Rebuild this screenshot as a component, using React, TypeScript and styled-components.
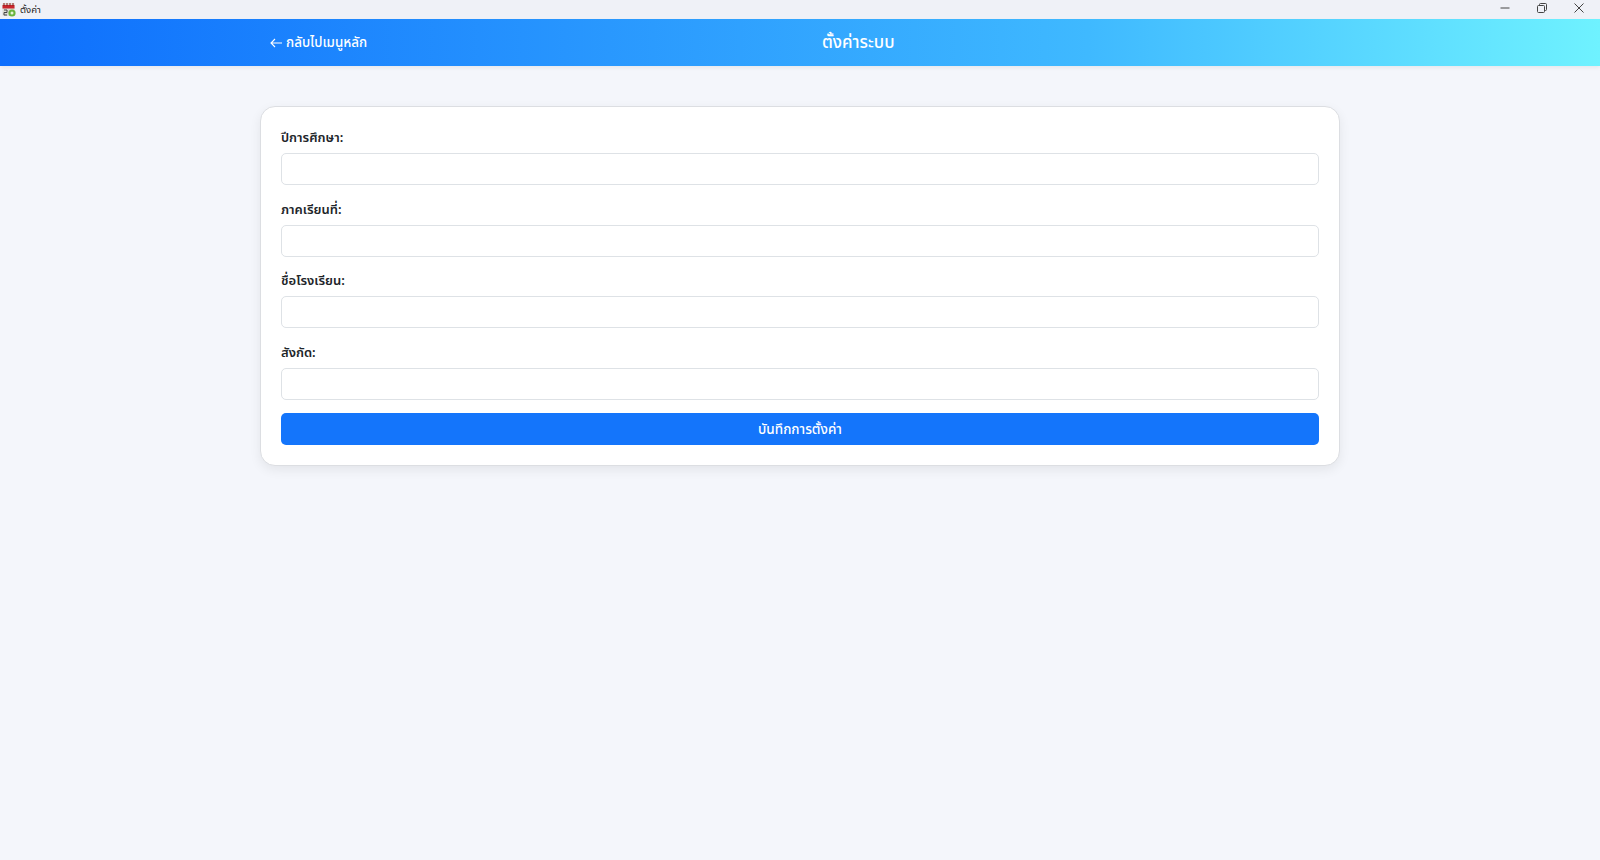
import styled, { createGlobalStyle } from 'styled-components'

const GlobalStyle = createGlobalStyle`
  html, body {
    margin: 0;
    padding: 0;
    height: 100%;
    background: #f4f6fb;
    font-family: 'Noto Sans', 'Noto Sans Thai', 'Noto Sans CJK SC', 'DejaVu Sans', sans-serif;
  }
  * { box-sizing: border-box; }
`

const Page = styled.div`
  width: 1600px;
  height: 860px;
  display: flex;
  flex-direction: column;
  overflow: hidden;
`

const TitleBar = styled.div`
  height: 19px;
  flex: none;
  display: flex;
  align-items: center;
  background: #eff1f7;
  padding-left: 2px;
`

const TitleText = styled.span`
  margin-left: 4px;
  font-size: 9.5px;
  color: #222;
`

const WindowButtons = styled.div`
  margin-left: auto;
  display: flex;
  align-items: center;
  gap: 27px;
  padding: 0 16px 3px 0;
  svg { display: block; }
`

const Header = styled.header`
  height: 47px;
  flex: none;
  display: flex;
  align-items: center;
  padding: 1px 0 0 270px;
  background: linear-gradient(90deg, #0d6efd 0%, #3fb9ff 68%, #6ff2ff 100%);
  box-shadow: 0 2px 4px rgba(0, 0, 0, 0.06);
  color: #fff;
`

const BackLink = styled.a`
  display: flex;
  align-items: center;
  gap: 3px;
  width: 552px;
  font-size: 13.4px;
  font-weight: 500;
  color: #fff;
`

const Title = styled.h1`
  margin: 0;
  font-size: 16.9px;
  font-weight: 500;
`

const Card = styled.main`
  width: 1080px;
  height: 360px;
  margin: 40px 0 0 260px;
  padding: 14px 20px 20px;
  background: #fff;
  border: 1px solid #dcdee2;
  border-radius: 15px;
  box-shadow: 0 4px 12px rgba(0, 0, 0, 0.07);
`

const Field = styled.div`
  display: flex;
  flex-direction: column;
  height: 71.6px;
`

const Label = styled.label`
  height: 32px;
  display: flex;
  align-items: center;
  padding-top: 2px;
  font-size: 13px;
  font-weight: 600;
  color: #212529;
`

const Input = styled.input`
  width: 100%;
  height: 32px;
  background: #fff;
  border: 1px solid #dee2e6;
  border-radius: 5px;
`

const SaveButton = styled.button`
  display: block;
  width: 100%;
  height: 32px;
  margin-top: 6px;
  padding-top: 2px;
  background: #1475fb;
  border: none;
  border-radius: 5px;
  color: #fff;
  font: inherit;
  font-size: 13.5px;
  font-weight: 500;
`

const AppIcon = () => (
  <svg width="14" height="15" viewBox="0 0 14 15">
    <rect x="0.5" y="1" width="12" height="13" rx="1" fill="#dcdcd6" />
    <rect x="0.5" y="3" width="12" height="3.5" fill="#c8242c" />
    <path d="M2 1v3M5 1v3M8 1v3M11 1v3" stroke="#8a1c1c" strokeWidth="1" />
    <path d="M2 8h3v2.5H2V13h3" fill="none" stroke="#444" strokeWidth="1" />
    <circle cx="10" cy="11" r="3.6" fill="#6ab43e" />
    <circle cx="10" cy="11" r="1.5" fill="#e6f2d8" />
  </svg>
)

const fields = ['ปีการศึกษา:', 'ภาคเรียนที่:', 'ชื่อโรงเรียน:', 'สังกัด:']

export default function App() {
  return (
    <Page>
      <GlobalStyle />
      <TitleBar>
        <AppIcon />
        <TitleText>ตั้งค่า</TitleText>
        <WindowButtons>
          <svg width="10" height="10" viewBox="0 0 10 10">
            <path d="M0.5 5h9" stroke="#444" strokeWidth="1" />
          </svg>
          <svg width="10" height="10" viewBox="0 0 10 10" fill="none" stroke="#444" strokeWidth="1">
            <rect x="0.5" y="2.5" width="7" height="7" rx="1" />
            <path d="M2.5 2.5V1.5a1 1 0 0 1 1-1h5a1 1 0 0 1 1 1v5a1 1 0 0 1-1 1h-1" />
          </svg>
          <svg width="10" height="10" viewBox="0 0 10 10">
            <path d="M0.5 0.5l9 9M9.5 0.5l-9 9" stroke="#444" strokeWidth="1" />
          </svg>
        </WindowButtons>
      </TitleBar>
      <Header>
        <BackLink>
          <svg width="13" height="10" viewBox="0 0 13 10" fill="none" stroke="#fff" strokeWidth="1.1">
            <path d="M12 5H1M5 1L1 5l4 4" />
          </svg>
          กลับไปเมนูหลัก
        </BackLink>
        <Title>ตั้งค่าระบบ</Title>
      </Header>
      <Card>
        {fields.map((name) => (
          <Field key={name}>
            <Label>{name}</Label>
            <Input type="text" />
          </Field>
        ))}
        <SaveButton>บันทึกการตั้งค่า</SaveButton>
      </Card>
    </Page>
  )
}
